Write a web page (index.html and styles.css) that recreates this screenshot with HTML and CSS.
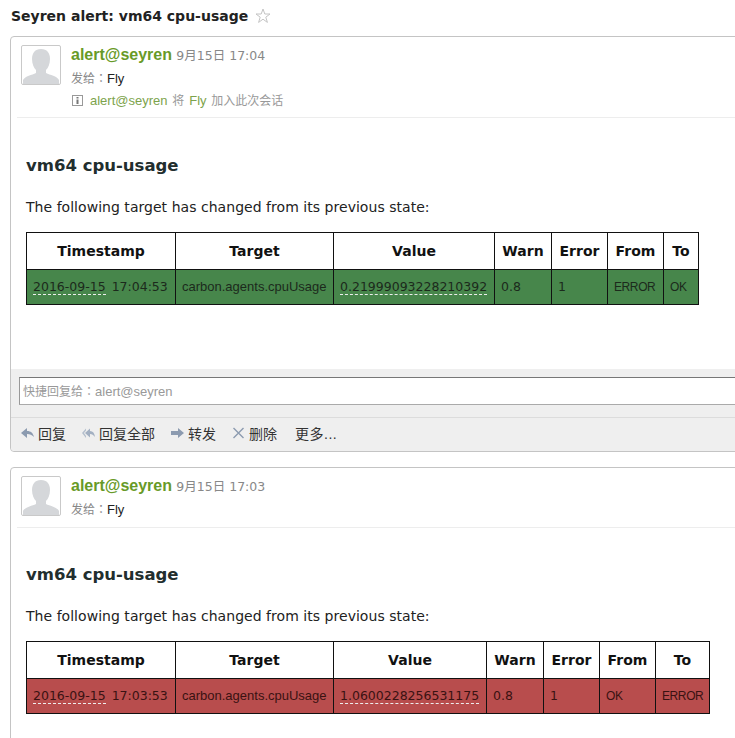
FILE: index.html
```html
<!DOCTYPE html>
<html lang="zh-CN">
<head>
    <meta charset="UTF-8">
    <title>Seyren alert: vm64 cpu-usage</title>
    <link rel="stylesheet" href="styles.css">
</head>
<body>
    <div class="subject">
        <h1>Seyren alert: vm64 cpu-usage</h1>
        <svg class="star" width="16" height="16" viewBox="0 0 16 16"><path d="M8 1l1.800 5h5.200l-4.200 3.200 1.600 5.200L8 11.200l-4.400 3.200 1.600-5.200L1 6h5.200z" fill="none" stroke="#c4c4c4"/></svg>
    </div>

    <div class="mail">
        <div class="mail-head">
            <div class="avatar">
                <svg width="38" height="38" viewBox="0 0 38 38"><path d="M19 2c6 0 9 4 9 10 0 5-2 9-4 11v3c4 2 11 3 13 7v4H1v-4c2-4 9-5 13-7v-3c-2-2-4-6-4-11 0-6 3-10 9-10z" fill="#d5d7da"/></svg>
            </div>
            <div class="meta">
                <div class="from"><span class="sender">alert@seyren</span> <span class="date">9月15日 17:04</span></div>
                <div class="to">发给<span class="colon" lang="zh-TW">：</span><span class="name">Fly</span></div>
                <div class="notice">
                    <svg width="11" height="11" viewBox="0 0 11 11"><rect x=".5" y=".5" width="10" height="10" fill="none" stroke="#999"/><rect x="4.500" y="2" width="2" height="1.500" fill="#777"/><rect x="4.500" y="4.500" width="2" height="4.500" fill="#777"/></svg><span class="green">alert@seyren</span> 将 <span class="green">Fly</span> 加入此次会话
                </div>
            </div>
        </div>
        <div class="mail-body">
            <h2>vm64 cpu-usage</h2>
            <p>The following target has changed from its previous state:</p>
            <table class="alert ok">
                <colgroup><col class="c-time"><col class="c-target"><col class="c-value-a"><col class="c-warn"><col class="c-error"><col class="c-from"><col class="c-to-a"></colgroup>
                <tr><th>Timestamp</th><th>Target</th><th>Value</th><th>Warn</th><th>Error</th><th>From</th><th>To</th></tr>
                <tr><td><span class="dash">2016-09-15</span> 17:04:53</td><td class="arial">carbon.agents.cpuUsage</td><td><span class="dash">0.21999093228210392</span></td><td>0.8</td><td>1</td><td class="state">ERROR</td><td class="state">OK</td></tr>
            </table>
        </div>
        <div class="reply-box">
            <div class="reply-input">快捷回复给<span class="colon" lang="zh-TW">：</span><span class="latin">alert@seyren</span></div>
        </div>
        <div class="actions">
            <span class="action">
                <svg width="13" height="12" viewBox="0 0 13 12"><path d="M0 6l6-5v3c4 0 6 2 7 6-2-2-4-3-7-3v4z" fill="#8c9bb0"/></svg>回复
            </span>
            <span class="action">
                <svg width="13" height="12" viewBox="0 0 13 12"><path d="M0 6l4-4.500v2L2 6l2 3v2z" fill="#b4bfcd"/><path d="M3 6l5-4.500V4c3 0 4.500 2 5 6-1.500-2-3-3-5-3v3.500z" fill="#a3b0c2"/></svg>回复全部
            </span>
            <span class="action">
                <svg width="13" height="12" viewBox="0 0 13 12"><path d="M0 4h7V1l6 5-6 5V8H0z" fill="#8c9bb0"/></svg>转发
            </span>
            <span class="action">
                <svg width="13" height="12" viewBox="0 0 13 12"><path d="M1.500 1l10 10M11.500 1l-10 10" stroke="#8c9bb0" stroke-width="1.400" fill="none"/></svg>删除
            </span>
            <span class="action more">更多...</span>
        </div>
    </div>

    <div class="mail">
        <div class="mail-head short">
            <div class="avatar">
                <svg width="38" height="38" viewBox="0 0 38 38"><path d="M19 2c6 0 9 4 9 10 0 5-2 9-4 11v3c4 2 11 3 13 7v4H1v-4c2-4 9-5 13-7v-3c-2-2-4-6-4-11 0-6 3-10 9-10z" fill="#d5d7da"/></svg>
            </div>
            <div class="meta">
                <div class="from"><span class="sender">alert@seyren</span> <span class="date">9月15日 17:03</span></div>
                <div class="to">发给<span class="colon" lang="zh-TW">：</span><span class="name">Fly</span></div>
            </div>
        </div>
        <div class="mail-body">
            <h2>vm64 cpu-usage</h2>
            <p>The following target has changed from its previous state:</p>
            <table class="alert bad">
                <colgroup><col class="c-time"><col class="c-target"><col class="c-value-b"><col class="c-warn"><col class="c-error"><col class="c-from"><col class="c-to-b"></colgroup>
                <tr><th>Timestamp</th><th>Target</th><th>Value</th><th>Warn</th><th>Error</th><th>From</th><th>To</th></tr>
                <tr><td><span class="dash">2016-09-15</span> 17:03:53</td><td class="arial">carbon.agents.cpuUsage</td><td><span class="dash">1.0600228256531175</span></td><td>0.8</td><td>1</td><td class="state">OK</td><td class="state">ERROR</td></tr>
            </table>
        </div>
    </div>
</body>
</html>
```

FILE: styles.css
```css
* {
    margin: 0;
    padding: 0;
    box-sizing: border-box;
}

html, body {
    height: 738px;
    overflow: hidden;
}

body {
    background: #fff;
    color: #222;
    font-family: "Liberation Sans", "Noto Sans CJK SC", sans-serif;
    font-size: 12px;
    width: 760px;
    padding: 0 0 0 10px;
}

.subject {
    display: flex;
    align-items: center;
    gap: 7px;
    height: 36px;
    padding-bottom: 5px;
}

h1 {
    font-family: "DejaVu Sans", sans-serif;
    font-size: 14px;
    font-weight: bold;
    color: #222;
    margin-left: 1px;
}

.mail {
    border: 1px solid #c4c4c4;
    border-radius: 4px;
    margin-bottom: 15px;
    width: 745px;
}

.mail-head {
    display: flex;
    gap: 10px;
    height: 81px;
    margin: 0 0 0 6px;
    padding: 8px 0 0 4px;
    border-bottom: 1px solid #ededed;
}

.mail-head.short {
    height: 60px;
}

.avatar {
    width: 40px;
    height: 40px;
    border: 1px solid #c9c9c9;
    border-radius: 2px;
    overflow: hidden;
}

.avatar svg {
    display: block;
    margin: 1px 0 0 0;
}

.from {
    font-size: 12px;
    line-height: 20px;
}

.sender {
    color: #689a27;
    font-size: 16px;
    font-weight: bold;
}

.date {
    color: #888;
    font-family: "DejaVu Sans", "Noto Sans CJK SC", sans-serif;
    font-size: 12.500px;
    margin-left: 1px;
}

.to {
    color: #888;
    line-height: 22px;
    margin-top: 1px;
}

.colon {
    font-family: "Noto Sans CJK TC", sans-serif;
}

.name {
    color: #222;
    font-size: 13px;
}

.notice {
    color: #999;
    line-height: 22px;
    word-spacing: 1.500px;
}

.notice svg {
    margin: 0 7px 0 1px;
    vertical-align: -1px;
}

.green {
    color: #7da34c;
    font-size: 13px;
}

.mail-body {
    padding: 0 0 0 15px;
}

h2 {
    font-family: "DejaVu Sans", sans-serif;
    font-size: 16.500px;
    font-weight: bold;
    color: #222e2e;
    line-height: 20px;
    margin-top: 38px;
}

.mail-head.short + .mail-body h2 {
    margin-top: 37px;
}

.mail-body p {
    font-family: "DejaVu Sans", sans-serif;
    font-size: 14px;
    letter-spacing: 0.035px;
    color: #222;
    line-height: 20px;
    margin-top: 21px;
    margin-bottom: 15px;
}

.alert {
    border-collapse: collapse;
    table-layout: fixed;
    font-family: "DejaVu Sans", sans-serif;
    font-size: 12.500px;
    border: 1px solid #111;
    margin-bottom: 64px;
}

.alert.ok {
    width: 672px;
}

.alert.bad {
    width: 683px;
}

.alert th, .alert td {
    border: 1px solid #111;
    white-space: nowrap;
    overflow: hidden;
}

.alert th {
    height: 37px;
    font-size: 14px;
    text-align: center;
    color: #111;
    background: #fff;
}

.alert td {
    height: 35px;
    padding: 0 6px 1px;
    color: #1c2a1c;
    word-spacing: 2px;
}

.alert .arial {
    font-family: "Liberation Sans", sans-serif;
    font-size: 13px;
}

.alert .state {
    font-family: "Liberation Sans", sans-serif;
    font-size: 12px;
    letter-spacing: -0.4px;
}

.ok td {
    background: #47864b;
}

.bad td {
    background: #b84d4d;
    color: #3a1212;
}

.dash {
    border-bottom: 1px dashed #eee;
}

.c-time { width: 149px; }
.c-target { width: 158px; }
.c-value-a { width: 161px; }
.c-value-b { width: 153px; }
.c-warn { width: 57px; }
.c-error { width: 56px; }
.c-from { width: 56px; }
.c-to-a { width: 35px; }
.c-to-b { width: 54px; }

.reply-box {
    background: #efefef;
    height: 49px;
    padding: 8px 0 0 8px;
    border-bottom: 1px solid #dcdcdc;
}

.reply-input {
    height: 28px;
    background: #fff;
    border: 1px solid #aaa;
    border-top-color: #777;
    border-left-color: #999;
    color: #999;
    line-height: 25px;
    padding-left: 3px;
    font-size: 12px;
}

.latin {
    font-size: 13px;
}

.actions {
    background: #efefef;
    height: 33px;
    display: flex;
    align-items: center;
    gap: 16px;
    padding: 0 0 4px 10px;
    color: #333;
    font-size: 14px;
    border-radius: 0 0 4px 4px;
}

.action {
    display: flex;
    align-items: center;
    gap: 4px;
}

.more {
    margin-left: 2px;
    letter-spacing: 0.5px;
}
```
